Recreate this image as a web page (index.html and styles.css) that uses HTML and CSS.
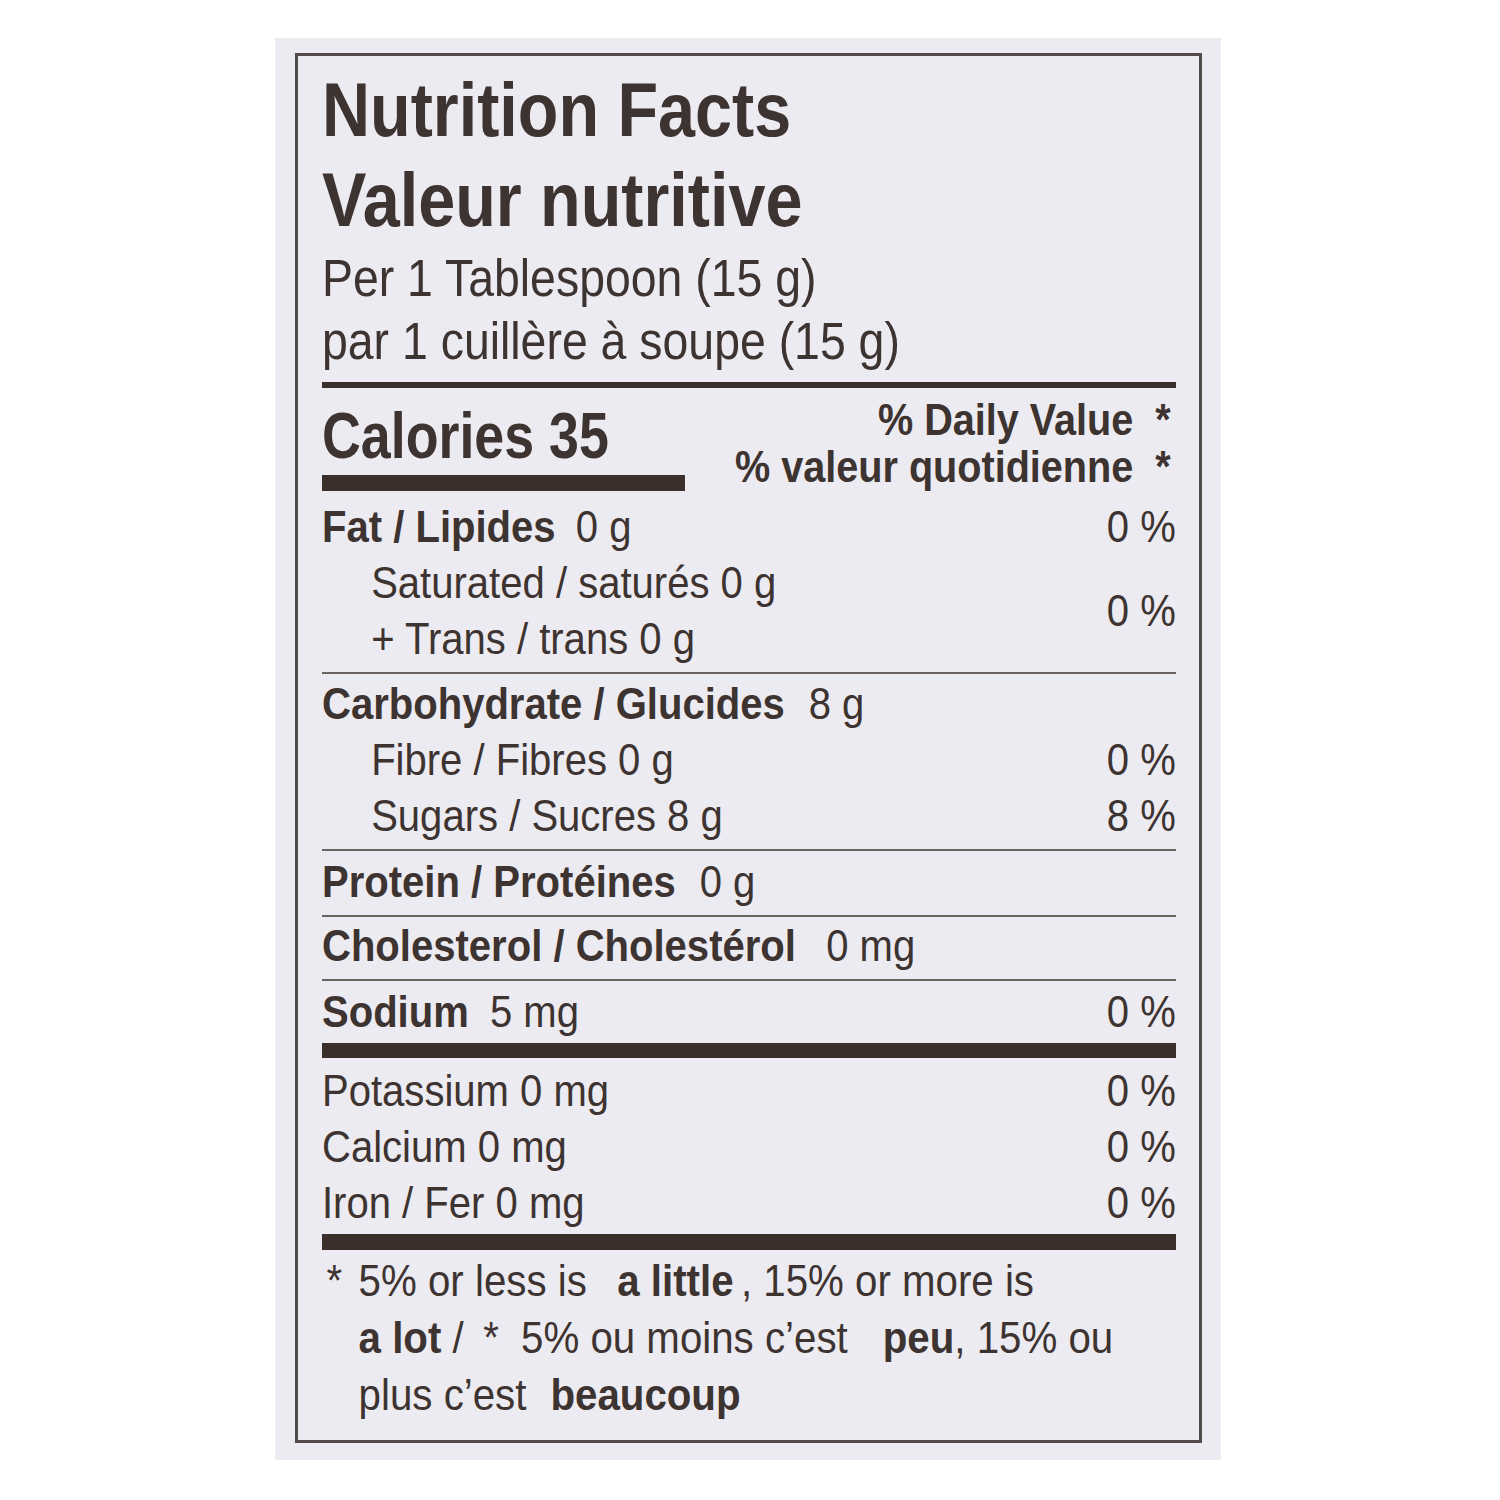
FILE: index.html
```html
<!DOCTYPE html>
<html lang="en">
<head>
<meta charset="utf-8">
<title>Nutrition Facts</title>
<link rel="stylesheet" href="styles.css">
</head>
<body>
<div class="panel">
  <div class="label">
    <h1 class="title">Nutrition Facts<br>Valeur nutritive</h1>
    <div class="serving">Per 1 Tablespoon (15 g)<br>par 1 cuillère à soupe (15 g)</div>
    <div class="rule-med"></div>
    <div class="cal-row">
      <div class="cal-left">
        <div class="calories">Calories 35</div>
        <div class="cal-bar"></div>
      </div>
      <div class="dv-head">% Daily Value&nbsp; *<br>% valeur quotidienne&nbsp; *</div>
    </div>

    <div class="row row-first"><span><b>Fat / Lipides</b> <span class="val v-fat">0 g</span></span><span>0 %</span></div>
    <div class="group">
      <span class="sub s1">Saturated / saturés 0 g</span>
      <span class="sub s2">+ Trans / trans 0 g</span>
      <span class="pct-span">0 %</span>
    </div>
    <div class="rule-thin"></div>

    <div class="row row-carb"><span><b>Carbohydrate / Glucides</b> <span class="val v-carb">8 g</span></span><span></span></div>
    <div class="row"><span class="sub">Fibre / Fibres 0 g</span><span>0 %</span></div>
    <div class="row"><span class="sub">Sugars / Sucres 8 g</span><span>8 %</span></div>
    <div class="rule-thin rule-after-sugars"></div>

    <div class="row"><span><b>Protein / Protéines</b> <span class="val v-prot">0 g</span></span><span></span></div>
    <div class="rule-thin"></div>

    <div class="row"><span><b>Cholesterol / Cholestérol</b> <span class="val v-chol">0 mg</span></span><span></span></div>
    <div class="rule-thin rule-after-chol"></div>

    <div class="row"><span><b>Sodium</b> <span class="val v-sod">5 mg</span></span><span>0 %</span></div>
    <div class="rule-thick rule-a"></div>

    <div class="minerals">
      <div class="row"><span>Potassium 0 mg</span><span>0 %</span></div>
      <div class="row"><span>Calcium 0 mg</span><span>0 %</span></div>
      <div class="row"><span>Iron / Fer 0 mg</span><span>0 %</span></div>
    </div>
    <div class="rule-thick rule-b"></div>

    <div class="footnote">
      <span class="star">*</span>
      <p class="foot-text">5% or less is <b class="gap-l">a little</b><span class="gap-c">,</span> 15% or more is<br><b>a lot</b> / <span class="gap-star">*</span> <span class="gap-five">5% ou moins c’est</span> <b class="gap-l2">peu</b>, 15% ou<br>plus c’est <b class="gap-l3">beaucoup</b></p>
    </div>
  </div>
</div>
</body>
</html>
```

FILE: styles.css
```css
html, body {
  margin: 0;
  padding: 0;
  background: #ffffff;
}

.panel {
  box-sizing: border-box;
  width: 946px;
  height: 1422px;
  margin: 38px 0 0 275px;
  padding: 15px 19px 17px 20px;
  background: #ecebf1;
}

.label {
  box-sizing: border-box;
  height: 100%;
  border: 3px solid #514b49;
  padding: 9px 23px 0 24px;
  color: #3d3330;
  font-family: "Liberation Sans", Arial, sans-serif;
  font-size: 44px;
  white-space: nowrap;
}

.title {
  margin: 0;
  font-size: 76px;
  line-height: 90px;
  font-weight: 700;
  transform: scaleX(0.875);
  transform-origin: left center;
}

.serving {
  margin-top: 2px;
  font-size: 51px;
  line-height: 63px;
  transform: scaleX(0.91);
  transform-origin: left center;
}

.rule-med {
  height: 6px;
  margin-top: 9px;
  background: #3a2f2a;
}

.cal-row {
  display: flex;
  justify-content: space-between;
  align-items: flex-start;
}

.cal-left {
  width: 363px;
}

.calories {
  margin-top: 16px;
  font-size: 64px;
  line-height: 64px;
  font-weight: 700;
  transform: scaleX(0.84);
  transform-origin: left center;
}

.cal-bar {
  height: 16px;
  margin-top: 7px;
  background: #3a2f2a;
}

.dv-head {
  padding-top: 8px;
  padding-right: 6px;
  font-weight: 700;
  line-height: 47px;
  text-align: right;
  transform: scaleX(0.9);
  transform-origin: right center;
}

.row {
  display: flex;
  justify-content: space-between;
  height: 56px;
  line-height: 56px;
}

.row > span,
.group > span {
  transform: scaleX(0.91);
}

.row > span:first-child,
.group > .sub {
  transform-origin: left center;
}

.row > span:last-child,
.group > .pct-span {
  transform-origin: right center;
}

.row-first {
  margin-top: 8px;
}

.row-carb {
  margin-top: 2px;
}

b {
  font-weight: 700;
}

.v-fat { margin-left: 10px; }
.v-carb { margin-left: 14px; }
.v-prot { margin-left: 14px; }
.v-chol { margin-left: 21px; }
.v-sod { margin-left: 11px; }

.sub {
  padding-left: 54px;
}

.group {
  display: grid;
  grid-template-columns: 1fr auto;
  grid-template-rows: 56px 56px;
  line-height: 56px;
}

.group .s1 { grid-column: 1; grid-row: 1; }
.group .s2 { grid-column: 1; grid-row: 2; }

.pct-span {
  grid-column: 2;
  grid-row: 1 / span 2;
  align-self: center;
}

.rule-thin {
  height: 2px;
  margin: 5px 0 1px;
  background: #6b6462;
}

.rule-after-sugars {
  margin-bottom: 3px;
}

.rule-after-chol {
  margin-bottom: 3px;
}

.rule-thick {
  height: 15px;
  background: #3a2f2a;
}

.rule-a {
  margin-top: 3px;
}

.minerals {
  margin-top: 5px;
}

.rule-b {
  margin-top: 3px;
  height: 16px;
}

.footnote {
  display: flex;
  margin-top: 2px;
  line-height: 57px;
  transform: scaleX(0.915);
  transform-origin: left center;
}

.star {
  width: 40px;
  flex: none;
  padding-left: 5px;
  box-sizing: border-box;
}

.foot-text {
  margin: 0;
}

.gap-l { margin-left: 21px; }
.gap-l2 { margin-left: 26px; }
.gap-l3 { margin-left: 14px; }
.gap-c { margin-left: 8px; }
.gap-star { margin-left: 9px; }
.gap-five { margin-left: 12px; }
```
